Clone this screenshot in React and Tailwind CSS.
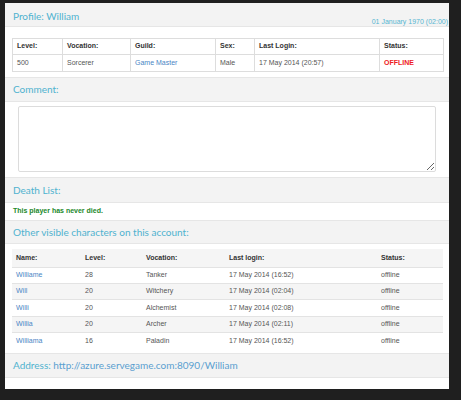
const otros = [
  { nombre: "Williame", nivel: 28, vocacion: "Tanker", login: "17 May 2014 (16:52)" },
  { nombre: "Will", nivel: 20, vocacion: "Witchery", login: "17 May 2014 (02:04)" },
  { nombre: "Willi", nivel: 20, vocacion: "Alchemist", login: "17 May 2014 (02:08)" },
  { nombre: "Willia", nivel: 20, vocacion: "Archer", login: "17 May 2014 (02:11)" },
  { nombre: "Williama", nivel: 16, vocacion: "Paladin", login: "17 May 2014 (16:52)" },
];

const fuenteTitulo = { fontFamily: 'Lato, "Open Sans", sans-serif' };

const Encabezado = ({ children, className = "" }) => (
  <div
    className={`bg-[#f3f3f3] border-y border-[#e6e6e6] px-[8px] flex items-center text-[10px] text-[#4fb2cf] ${className}`}
    style={fuenteTitulo}
  >
    {children}
  </div>
);

export default function App() {
  return (
    <div
      className="min-h-[400px] w-full bg-[#1f1f1f] pt-[3px] pl-[5px]"
      style={{ fontFamily: '"Liberation Sans", Arial, sans-serif' }}
    >
      <div className="w-[444px] bg-white">
        {/* Encabezado del perfil */}
        <div className="h-[24px] bg-[#f3f3f3] border-b border-[#e6e6e6] px-[8px] relative">
          <p className="pt-[6px] text-[10px] text-[#4fb2cf] leading-[14px]" style={fuenteTitulo}>
            Profile: William
          </p>
          <span className="absolute right-[1px] bottom-[1px] text-[7px] text-[#55b6d2] leading-none">
            01 January 1970 (02:00)
          </span>
        </div>

        {/* Datos del personaje */}
        <div className="pt-[11px] pb-[5px] px-[7px]">
          <table className="w-[431px] table-fixed border-collapse border border-[#dddddd] text-[7px]">
            <colgroup>
              <col className="w-[50px]" />
              <col className="w-[68px]" />
              <col className="w-[85px]" />
              <col className="w-[39px]" />
              <col className="w-[125px]" />
              <col className="w-[64px]" />
            </colgroup>
            <thead>
              <tr className="h-[16px] font-bold text-[#333]">
                {["Level:", "Vocation:", "Guild:", "Sex:", "Last Login:", "Status:"].map((t) => (
                  <th key={t} className="border border-[#dddddd] px-[4px] text-left">
                    {t}
                  </th>
                ))}
              </tr>
            </thead>
            <tbody>
              <tr className="h-[17px] text-[#555]">
                <td className="border border-[#dddddd] px-[4px]">500</td>
                <td className="border border-[#dddddd] px-[4px]">Sorcerer</td>
                <td className="border border-[#dddddd] px-[4px] text-[#4a86c5]">Game Master</td>
                <td className="border border-[#dddddd] px-[4px]">Male</td>
                <td className="border border-[#dddddd] px-[4px]">17 May 2014 (20:57)</td>
                <td className="border border-[#dddddd] px-[4px] font-bold text-[#ee1c25]">OFFLINE</td>
              </tr>
            </tbody>
          </table>
        </div>

        {/* Comentario */}
        <Encabezado className="h-[25px]">Comment:</Encabezado>
        <div className="pt-[4px] pb-[5px] pl-[13px]">
          <textarea className="block w-[418px] h-[66px] border border-[#dcdcdc] rounded-[2px] resize-y" readOnly />
        </div>

        {/* Muertes */}
        <Encabezado className="h-[26px]">Death List:</Encabezado>
        <div className="h-[17px] px-[8px] flex items-center text-[7px] font-bold text-[#22882a]">
          This player has never died.
        </div>

        {/* Otros personajes */}
        <Encabezado className="h-[24px]">Other visible characters on this account:</Encabezado>
        <div className="pt-[5px] pb-[4px] px-[7px]">
          <table className="w-[431px] table-fixed border-collapse text-[7px]">
            <colgroup>
              <col className="w-[69px]" />
              <col className="w-[61px]" />
              <col className="w-[83px]" />
              <col className="w-[152px]" />
              <col className="w-[66px]" />
            </colgroup>
            <tbody>
              <tr className="h-[18px] bg-[#f5f5f5] font-bold text-[#333]">
                {["Name:", "Level:", "Vocation:", "Last login:", "Status:"].map((t) => (
                  <td key={t} className="px-[4px]">
                    {t}
                  </td>
                ))}
              </tr>
              {otros.map((o, i) => (
                <tr
                  key={o.nombre}
                  className={`h-[16.4px] border-t border-[#e3e3e3] text-[#555] ${i % 2 === 1 ? "bg-[#f5f5f5]" : "bg-white"}`}
                >
                  <td className="px-[4px] text-[#4a86c5]">{o.nombre}</td>
                  <td className="px-[4px]">{o.nivel}</td>
                  <td className="px-[4px]">{o.vocacion}</td>
                  <td className="px-[4px]">{o.login}</td>
                  <td className="px-[4px]">offline</td>
                </tr>
              ))}
            </tbody>
          </table>
        </div>

        {/* Dirección */}
        <Encabezado className="h-[25px]">
          <span>Address:&nbsp;</span>
          <span className="text-[#5a9fd0]">http://azure.servegame.com:8090/William</span>
        </Encabezado>
        <div className="h-[11px]" />
      </div>
    </div>
  );
}
